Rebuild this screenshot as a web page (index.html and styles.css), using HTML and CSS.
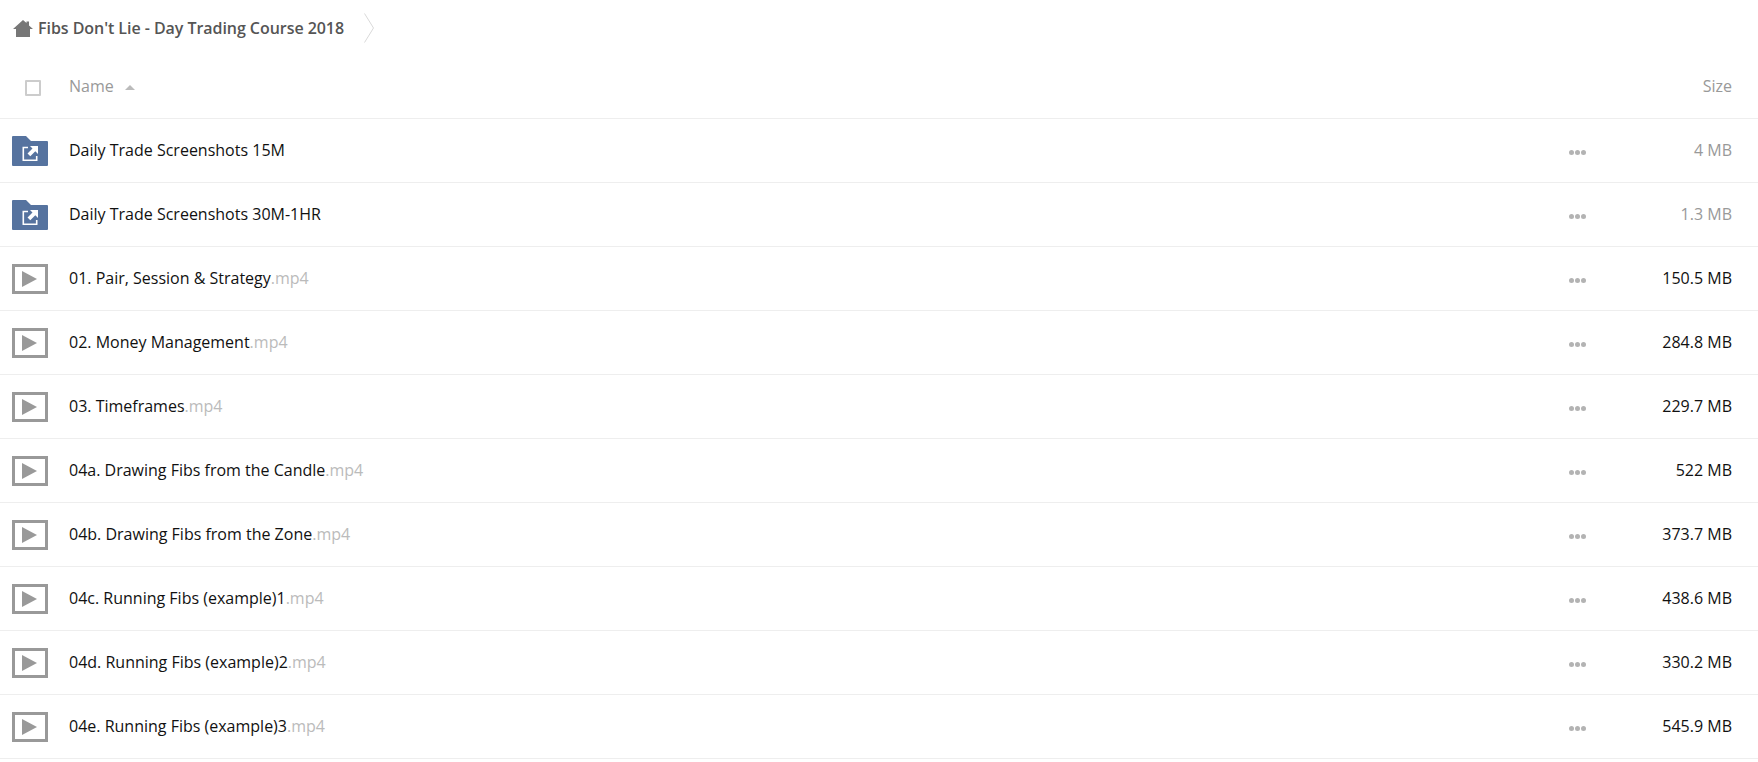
FILE: index.html
```html
<!DOCTYPE html>
<html lang="en">
<head>
    <meta charset="UTF-8">
    <title>Fibs Don't Lie - Day Trading Course 2018</title>
    <link rel="stylesheet" href="styles.css">
</head>
<body>
    <svg class="icon-defs" width="0" height="0">
        <symbol id="icon-folder" viewBox="0 0 36 30">
            <path d="M0 1a1 1 0 0 1 1-1h13l5 5h16a1 1 0 0 1 1 1v23a1 1 0 0 1-1 1H1a1 1 0 0 1-1-1z" fill="#56739f"/>
            <path d="M16 11.500h-4.700V24.200h13.400V20" fill="none" stroke="#fff" stroke-width="1.600"/>
            <path d="M18 10h8v8l-2.700-2.700-5 5-2.800-2.800 5-5z" fill="#fff"/>
        </symbol>
        <symbol id="icon-video" viewBox="0 0 36 30">
            <rect x="1.500" y="1.500" width="33" height="27" fill="#fff" stroke="#999" stroke-width="3"/>
            <path d="M10 7l15 8-15 8z" fill="#999"/>
        </symbol>
    </svg>

    <div class="breadcrumb">
        <svg class="home-icon" viewBox="0 0 20 17"><path d="M10 0l3.500 3V1.500H16v4l4 3.500h-3v8H3V9H0z" fill="#777"/></svg>
        <span class="crumb-title">Fibs Don't Lie - Day Trading Course 2018</span>
        <svg class="crumb-arrow" viewBox="0 0 10 30"><path d="M.5 .5l9 14.500-9 14.500" fill="none" stroke="#d9d9d9"/></svg>
    </div>

    <div class="list-head">
        <div class="check-col"><span class="checkbox"></span></div>
        <div class="name-col head-name">Name <span class="sort-up"></span></div>
        <div class="size-col">Size</div>
    </div>

    <div class="file-row folder">
        <svg class="file-icon"><use href="#icon-folder"/></svg>
        <div class="name-col">Daily Trade Screenshots 15M</div>
        <div class="dots"><i></i><i></i><i></i></div>
        <div class="size-col">4 MB</div>
    </div>
    <div class="file-row folder">
        <svg class="file-icon"><use href="#icon-folder"/></svg>
        <div class="name-col">Daily Trade Screenshots 30M-1HR</div>
        <div class="dots"><i></i><i></i><i></i></div>
        <div class="size-col">1.3 MB</div>
    </div>
    <div class="file-row">
        <svg class="file-icon"><use href="#icon-video"/></svg>
        <div class="name-col">01. Pair, Session &amp; Strategy<span class="ext">.mp4</span></div>
        <div class="dots"><i></i><i></i><i></i></div>
        <div class="size-col">150.5 MB</div>
    </div>
    <div class="file-row">
        <svg class="file-icon"><use href="#icon-video"/></svg>
        <div class="name-col">02. Money Management<span class="ext">.mp4</span></div>
        <div class="dots"><i></i><i></i><i></i></div>
        <div class="size-col">284.8 MB</div>
    </div>
    <div class="file-row">
        <svg class="file-icon"><use href="#icon-video"/></svg>
        <div class="name-col">03. Timeframes<span class="ext">.mp4</span></div>
        <div class="dots"><i></i><i></i><i></i></div>
        <div class="size-col">229.7 MB</div>
    </div>
    <div class="file-row">
        <svg class="file-icon"><use href="#icon-video"/></svg>
        <div class="name-col">04a. Drawing Fibs from the Candle<span class="ext">.mp4</span></div>
        <div class="dots"><i></i><i></i><i></i></div>
        <div class="size-col">522 MB</div>
    </div>
    <div class="file-row">
        <svg class="file-icon"><use href="#icon-video"/></svg>
        <div class="name-col">04b. Drawing Fibs from the Zone<span class="ext">.mp4</span></div>
        <div class="dots"><i></i><i></i><i></i></div>
        <div class="size-col">373.7 MB</div>
    </div>
    <div class="file-row">
        <svg class="file-icon"><use href="#icon-video"/></svg>
        <div class="name-col">04c. Running Fibs (example)1<span class="ext">.mp4</span></div>
        <div class="dots"><i></i><i></i><i></i></div>
        <div class="size-col">438.6 MB</div>
    </div>
    <div class="file-row">
        <svg class="file-icon"><use href="#icon-video"/></svg>
        <div class="name-col">04d. Running Fibs (example)2<span class="ext">.mp4</span></div>
        <div class="dots"><i></i><i></i><i></i></div>
        <div class="size-col">330.2 MB</div>
    </div>
    <div class="file-row">
        <svg class="file-icon"><use href="#icon-video"/></svg>
        <div class="name-col">04e. Running Fibs (example)3<span class="ext">.mp4</span></div>
        <div class="dots"><i></i><i></i><i></i></div>
        <div class="size-col">545.9 MB</div>
    </div>
</body>
</html>
```

FILE: styles.css
```css
body {
    margin: 0;
    background: #fff;
    font-family: "Open Sans", Arial, sans-serif;
    font-size: 16px;
    color: #111;
    overflow: hidden;
}
.icon-defs {
    display: block;
    height: 0;
}
.breadcrumb {
    display: flex;
    align-items: center;
    height: 56px;
    padding-left: 13px;
}
.home-icon {
    width: 20px;
    height: 17px;
    margin-right: 5px;
}
.crumb-title {
    font-size: 16px;
    font-weight: 600;
    letter-spacing: -0.05px;
    color: #555;
    white-space: nowrap;
}
.crumb-arrow {
    width: 10px;
    height: 30px;
    margin-left: 20px;
}
.list-head {
    display: flex;
    align-items: center;
    height: 63px;
    padding-right: 26px;
    border-bottom: 1px solid #eee;
    box-sizing: border-box;
    color: #999;
}
.check-col {
    width: 69px;
    padding-left: 25px;
    padding-top: 2px;
    box-sizing: border-box;
}
.checkbox {
    display: block;
    width: 12px;
    height: 12px;
    border: 2px solid #ccc;
    border-radius: 1px;
}
.head-name {
    display: flex;
    align-items: center;
    gap: 11px;
}
.sort-up {
    width: 0;
    height: 0;
    border-left: 5px solid transparent;
    border-right: 5px solid transparent;
    border-bottom: 5px solid #bbb;
    margin-top: 3px;
}
.name-col {
    flex: 1;
    padding-bottom: 2px;
    white-space: nowrap;
}
.size-col {
    width: 120px;
    padding-bottom: 2px;
    text-align: right;
}
.file-row {
    display: flex;
    align-items: center;
    height: 64px;
    padding-right: 26px;
    border-bottom: 1px solid #eee;
    box-sizing: border-box;
}
.file-icon {
    width: 36px;
    height: 30px;
    margin-left: 12px;
    margin-right: 21px;
}
.folder .size-col {
    color: #999;
}
.ext {
    color: #bbb;
}
.dots {
    display: flex;
    gap: 1px;
    margin-top: 3px;
    margin-right: 26px;
}
.dots i {
    width: 5px;
    height: 5px;
    border-radius: 50%;
    background: #b3b3b3;
}
```
